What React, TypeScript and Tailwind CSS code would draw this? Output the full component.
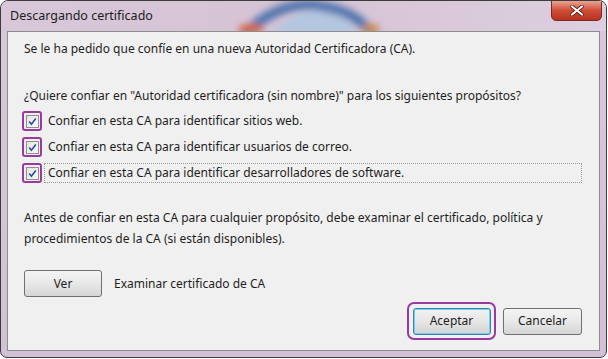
import React from 'react';

const font = { fontFamily: '"Noto Sans", "Open Sans", sans-serif' };

function CheckBox() {
  return (
    <span className="flex h-[20px] w-[20px] items-center justify-center rounded-[3px] border-[2px] border-[#9a3aa0]">
      <span className="flex h-[13px] w-[13px] items-center justify-center border border-[#8f8f8f] bg-gradient-to-br from-[#e4e4e4] to-[#fbfbfb]">
        <svg width="9" height="9" viewBox="0 0 9 9">
          <path d="M1.2 4.6 L3.4 7.2 L7.8 1.4" fill="none" stroke="#2c4ba0" strokeWidth="1.6" />
        </svg>
      </span>
    </span>
  );
}

function TitleGlow() {
  return (
    <svg className="absolute left-[220px] top-0" width="180" height="31" viewBox="0 0 180 31">
      <defs>
        <filter id="b" x="-20%" y="-50%" width="140%" height="200%">
          <feGaussianBlur stdDeviation="3.5" />
        </filter>
      </defs>
      <g filter="url(#b)">
        <path d="M48 34 Q75 6 105 10 Q130 16 136 34" fill="#b4c6e0" />
        <path d="M22 34 Q60 -2 100 5 Q138 11 150 34" fill="none" stroke="#4f73ad" strokeWidth="10" />
        <ellipse cx="30" cy="28" rx="13" ry="5" fill="#d4683f" />
        <ellipse cx="150" cy="28" rx="9" ry="5" fill="#c9884e" />
      </g>
    </svg>
  );
}

export default function App() {
  const purposes = [
    'Confiar en esta CA para identificar sitios web.',
    'Confiar en esta CA para identificar usuarios de correo.',
    'Confiar en esta CA para identificar desarrolladores de software.',
  ];

  return (
    <div className="h-[359px] w-[608px] bg-white" style={font}>
      <div className="flex h-[358px] w-[607px] flex-col rounded-t-[8px] rounded-b-[7px] border border-[#3c3c3c] bg-gradient-to-b from-[#d9c8da] to-[#d2c0d6]">
        <div className="relative h-[30px] shrink-0 overflow-hidden rounded-t-[7px] bg-gradient-to-r from-[#d8c7d9] via-[#d6c3d6] to-[#dccfe0]">
          <TitleGlow />
          <span className="absolute left-[9px] top-[6px] text-[12.5px] text-[#1c1c1c]">Descargando certificado</span>
          <div className="absolute right-[4px] top-[-1px] flex h-[21px] w-[51px] items-center justify-center rounded-b-[5px] border border-[#7a2a22] bg-gradient-to-b from-[#e8a394] via-[#cf4b36] to-[#b73320]">
            <svg width="14" height="11" viewBox="0 0 14 11">
              <path d="M2 1.5 L12 9.5 M12 1.5 L2 9.5" stroke="#5a1a12" strokeWidth="3.6" strokeLinecap="round" />
              <path d="M2 1.5 L12 9.5 M12 1.5 L2 9.5" stroke="#ffffff" strokeWidth="2.2" strokeLinecap="round" />
            </svg>
          </div>
        </div>
        <div className="mx-[6px] flex h-[320px] flex-col border border-[#8d8d8d] bg-[#f0f0f0] px-[16px] text-[12px] text-[#1e1e1e]">
          <p className="mt-[7px] leading-[20px]">Se le ha pedido que confíe en una nueva Autoridad Certificadora (CA).</p>
          <p className="mt-[27px] leading-[20px]">¿Quiere confiar en "Autoridad certificadora (sin nombre)" para los siguientes propósitos?</p>
          <div className="mt-[5px] flex flex-col gap-[6px]">
            {purposes.map((p, i) => (
              <div key={p} className="flex h-[20px] items-center">
                <div className="-ml-[2px]"><CheckBox /></div>
                <span
                  className={
                    i === 2
                      ? 'ml-[2px] flex h-[20px] w-[538px] items-center border border-dotted border-[#9a9a9a] pl-[3px]'
                      : 'ml-[2px] pl-[4px]'
                  }
                >
                  {p}
                </span>
              </div>
            ))}
          </div>
          <p className="mt-[24px] leading-[21px]">
            Antes de confiar en esta CA para cualquier propósito, debe examinar el certificado, política y
            <br />
            procedimientos de la CA (si están disponibles).
          </p>
          <div className="mt-[21px] flex items-center">
            <button className="h-[27px] w-[78px] rounded-[3px] border border-[#707070] bg-gradient-to-b from-[#f4f4f4] via-[#e8e8e8] to-[#d5d5d5] text-[12px] text-[#1e1e1e]">
              Ver
            </button>
            <span className="ml-[12px]">Examinar certificado de CA</span>
          </div>
          <div className="mt-[5px] flex justify-end gap-[7px] pr-[1px]">
            <div className="flex h-[38px] w-[89px] items-center justify-center rounded-[7px] border-[2px] border-[#9a3aa0]">
              <button className="h-[27px] w-[78px] rounded-[3px] border border-[#3c7fb1] bg-gradient-to-b from-[#f2f2f2] via-[#e6e6e6] to-[#d3d3d3] text-[12px] text-[#1e1e1e] shadow-[inset_0_0_0_1px_#6fd0f2]">
                Aceptar
              </button>
            </div>
            <div className="flex items-center">
              <button className="h-[27px] w-[79px] rounded-[3px] border border-[#707070] bg-gradient-to-b from-[#f4f4f4] via-[#e8e8e8] to-[#d5d5d5] text-[12px] text-[#1e1e1e]">
                Cancelar
              </button>
            </div>
          </div>
        </div>
      </div>
    </div>
  );
}
